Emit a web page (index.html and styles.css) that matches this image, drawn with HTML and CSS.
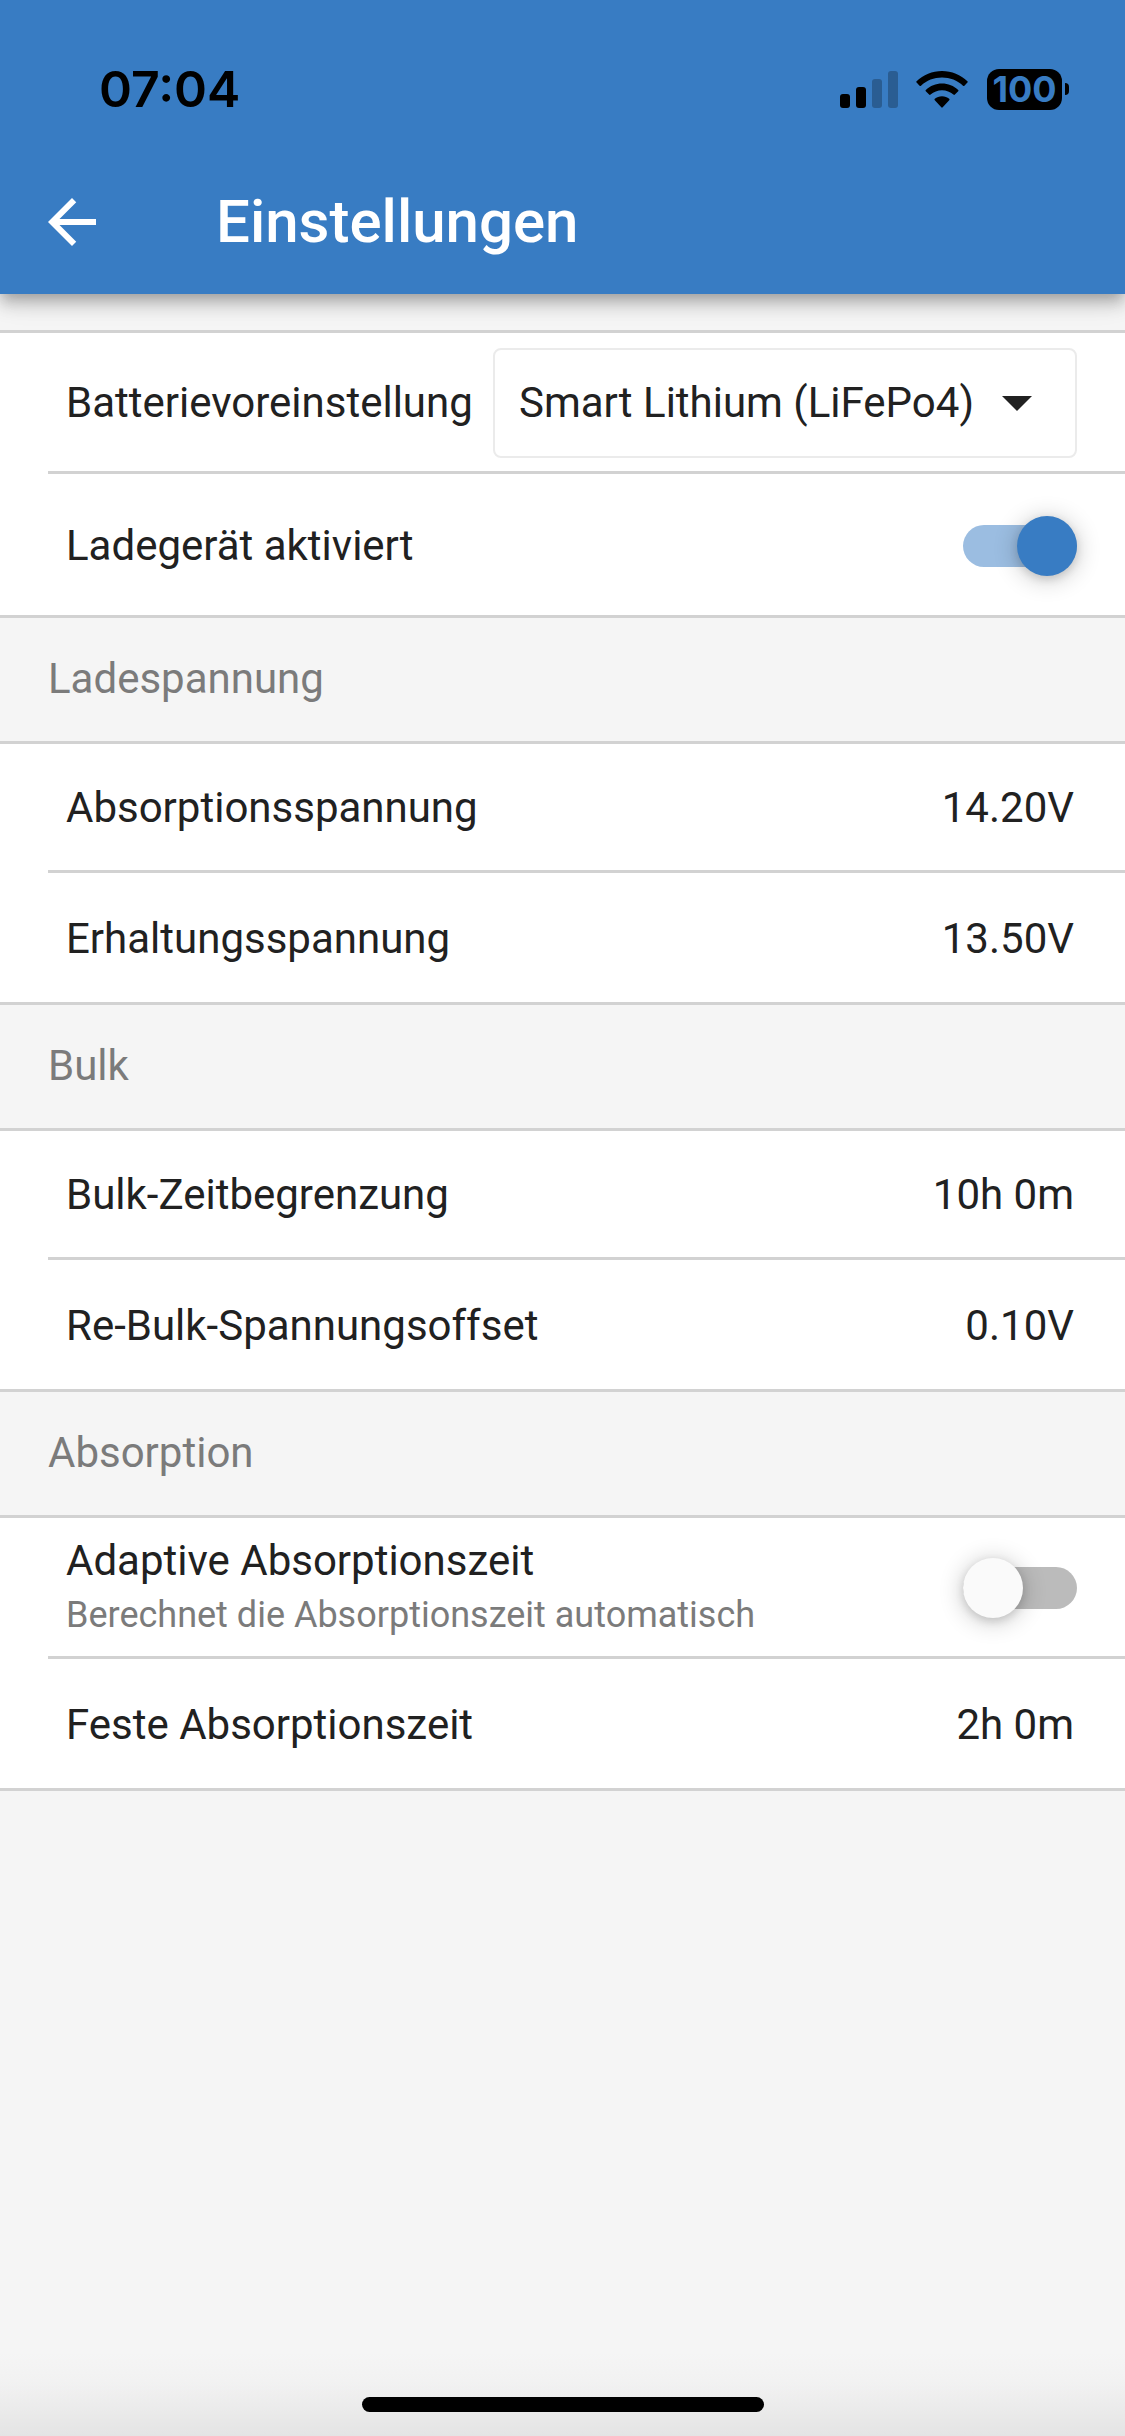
FILE: index.html
```html
<!DOCTYPE html>
<html lang="de">
<head>
<meta charset="utf-8">
<meta name="viewport" content="width=device-width, initial-scale=1">
<title>Einstellungen</title>
<link rel="stylesheet" href="styles.css">
</head>
<body>
<header class="header">
  <div class="status">
    <span class="status-time">07:04</span>
    <div class="status-icons">
      <svg class="signal" viewBox="0 0 58 38" aria-hidden="true">
        <rect x="0" y="24" width="10" height="14" rx="3"/>
        <rect x="16" y="17" width="10" height="21" rx="3"/>
        <rect class="dim" x="32" y="9" width="10" height="29" rx="3"/>
        <rect class="dim" x="48" y="1" width="10" height="37" rx="3"/>
      </svg>
      <svg class="wifi" viewBox="0 0 52 38" aria-hidden="true">
        <path d="M26 1C16.300 1 7.200 4.800.600 11.200q-.700.700 0 1.400l3 3.100q.700.700 1.400 0C10.600 10.500 18 7.600 26 7.600s15.400 2.900 21 8.100q.700.700 1.400 0l3-3.100q.700-.700 0-1.400C44.800 4.800 35.700 1 26 1z"/>
        <path d="M26 13.600c-6.100 0-11.800 2.300-16.200 6.300q-.700.700 0 1.400l3.300 3.300q.700.700 1.500 0c3.100-2.800 7.100-4.400 11.400-4.400s8.300 1.600 11.400 4.400q.800.700 1.500 0l3.300-3.300q.700-.700 0-1.400c-4.400-4-10.100-6.300-16.200-6.300z"/>
        <path d="M26 26.200c-2.800 0-5.300 1-7.200 2.600q-.800.700 0 1.500l6.500 7q.700.700 1.400 0l6.500-7q.800-.800 0-1.500c-1.900-1.600-4.400-2.600-7.200-2.600z"/>
      </svg>
      <div class="battery"><span class="battery-level">100</span><span class="battery-tip"></span></div>
    </div>
  </div>
  <div class="appbar">
    <button class="back" type="button" aria-label="Zurück">
      <svg viewBox="0 0 24 24" aria-hidden="true"><path d="M20 11H7.830l5.590-5.590L12 4l-8 8 8 8 1.410-1.410L7.830 13H20v-2z"/></svg>
    </button>
    <h1 class="title">Einstellungen</h1>
  </div>
</header>

<main class="content">
  <ul class="list">
    <li class="row row-tall">
      <label class="label" for="preset">Batterievoreinstellung</label>
      <div class="select">
        <select id="preset" class="select-input"><option>Smart Lithium (LiFePo4)</option></select>
        <svg class="select-arrow" viewBox="0 0 30 15" aria-hidden="true"><path d="M0 0h30L15 15z"/></svg>
      </div>
    </li>
    <li class="row row-tall">
      <label class="label" for="charger">Ladegerät aktiviert</label>
      <input id="charger" class="switch" type="checkbox" role="switch" checked>
    </li>
  </ul>

  <h2 class="section">Ladespannung</h2>
  <ul class="list">
    <li class="row"><span class="label">Absorptionsspannung</span><span class="value">14.20V</span></li>
    <li class="row"><span class="label">Erhaltungsspannung</span><span class="value">13.50V</span></li>
  </ul>

  <h2 class="section">Bulk</h2>
  <ul class="list">
    <li class="row"><span class="label">Bulk-Zeitbegrenzung</span><span class="value">10h 0m</span></li>
    <li class="row"><span class="label">Re-Bulk-Spannungsoffset</span><span class="value">0.10V</span></li>
  </ul>

  <h2 class="section">Absorption</h2>
  <ul class="list">
    <li class="row row-tall">
      <label class="label" for="adaptive">Adaptive Absorptionszeit<small class="hint">Berechnet die Absorptionszeit automatisch</small></label>
      <input id="adaptive" class="switch" type="checkbox" role="switch">
    </li>
    <li class="row"><span class="label">Feste Absorptionszeit</span><span class="value">2h 0m</span></li>
  </ul>
</main>

<footer class="home"><span class="home-bar"></span></footer>
</body>
</html>
```
FILE: styles.css
```css
:root {
  --blue: #387cc3;
  --line: #d2d2d2;
  --page: #f5f5f5;
  --ink: #212121;
  --muted: #7b7b7b;
}

* { box-sizing: border-box; }

body {
  margin: 0;
  min-height: 100vh;
  display: flex;
  flex-direction: column;
  background: var(--page);
  color: var(--ink);
  font-family: Roboto, "Liberation Sans", sans-serif;
  font-size: 42px;
  line-height: 54px;
}

/* Header */
.header {
  background: var(--blue);
  box-shadow: 0 6px 12px -3px rgba(0, 0, 0, .2), 0 12px 15px rgba(0, 0, 0, .14), 0 3px 30px rgba(0, 0, 0, .12);
}

.status {
  display: flex;
  align-items: center;
  justify-content: space-between;
  height: 148px;
  padding: 30px 56px 0 99px;
  color: #000;
  font-family: Inter, "Liberation Sans", sans-serif;
}

.status-time {
  font-size: 50px;
  font-weight: 600;
}

.status-icons {
  display: flex;
  align-items: center;
}

.signal { width: 58px; height: 38px; margin-right: 18px; }
.signal .dim { opacity: .25; }
.wifi { width: 52px; height: 38px; margin-right: 19px; }

.battery {
  display: flex;
  align-items: center;
  gap: 3px;
}

.battery-level {
  width: 75px;
  border-radius: 12px;
  background: #000;
  color: var(--blue);
  font-size: 36px;
  font-weight: 700;
  line-height: 41px;
  text-align: center;
}

.battery-tip {
  width: 4px;
  height: 12px;
  border-radius: 0 4px 4px 0;
  background: #000;
}

.appbar {
  display: flex;
  align-items: center;
  height: 146px;
  padding: 2px 36px 0;
}

.back {
  width: 72px;
  height: 72px;
  margin-right: 108px;
  padding: 0;
  border: 0;
  background: none;
}

.back svg { display: block; fill: #fff; }

.title {
  margin: 0;
  color: #fff;
  font-size: 60px;
  font-weight: 500;
  line-height: 72px;
}

/* Settings */
.content { padding-top: 36px; }

.list {
  margin: 0;
  padding: 0;
  list-style: none;
  background: #fff;
  border-block: 3px solid var(--line);
}

.row {
  display: flex;
  align-items: center;
  justify-content: space-between;
  min-height: 129px;
  margin-left: 48px;
  padding: 2px 48px 0 18px;
}

.row:not(:last-child) { border-bottom: 3px solid var(--line); }
.row-tall { min-height: 141px; }

.value { padding-right: 3px; }

.hint {
  display: block;
  color: var(--muted);
  font-size: 36px;
}

.section {
  margin: 0;
  padding: 34px 48px 35px;
  color: var(--muted);
  font-size: 42px;
  font-weight: 400;
}

/* Drop-down */
.select {
  display: grid;
  align-items: center;
}

.select-input,
.select-arrow { grid-area: 1 / 1; }

.select-input {
  appearance: none;
  height: 110px;
  padding: 0 100px 0 24px;
  border: 2px solid #ebebeb;
  border-radius: 8px;
  background: #fff;
  color: inherit;
  font: inherit;
}

.select-arrow {
  justify-self: end;
  width: 30px;
  height: 15px;
  margin-right: 45px;
  fill: var(--ink);
  pointer-events: none;
}

/* Switch */
.switch {
  appearance: none;
  display: flex;
  align-items: center;
  width: 114px;
  height: 42px;
  margin: 0;
  border-radius: 21px;
  background: #bbb;
}

.switch::before {
  content: "";
  flex: none;
  width: 60px;
  height: 60px;
  border-radius: 50%;
  background: #fafafa;
  box-shadow: 0 3px 9px rgba(0, 0, 0, .12), 0 3px 24px rgba(0, 0, 0, .24);
}

.switch:checked {
  justify-content: flex-end;
  background: #9bbde1;
}

.switch:checked::before { background: var(--blue); }

/* Home indicator */
.home {
  display: flex;
  justify-content: center;
  align-items: flex-end;
  height: 84px;
  margin-top: auto;
  padding-bottom: 24px;
  background: linear-gradient(var(--page), #f2f2f2 35%, #e4e4e4);
}

.home-bar {
  width: 402px;
  height: 15px;
  border-radius: 8px;
  background: #000;
}
```
